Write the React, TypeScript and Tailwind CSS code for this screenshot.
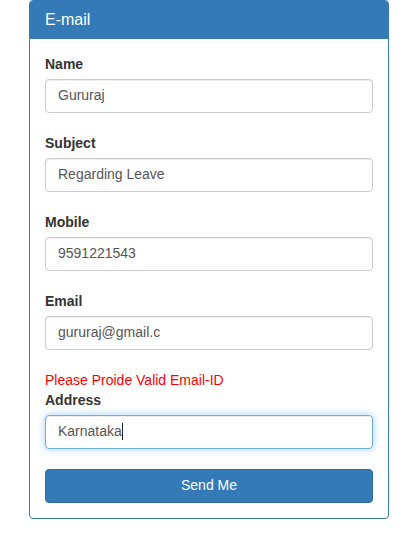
import React from "react";

function Field({ label, value, focused }: { label: string; value: string; focused?: boolean }) {
  return (
    <div>
      <div className="text-[14px] leading-[20px] font-bold text-[#333] mb-[5px]">{label}</div>
      <div
        className={
          "h-[34px] rounded-[4px] border bg-white px-[12px] flex items-center text-[14px] text-[#555] " +
          (focused
            ? "border-[#66afe9] shadow-[inset_0_1px_1px_rgba(0,0,0,0.075),0_0_8px_rgba(102,175,233,0.6)]"
            : "border-[#ccc] shadow-[inset_0_1px_1px_rgba(0,0,0,0.075)]")
        }
      >
        <span>{value}</span>
        {focused && <span className="inline-block w-px h-[17px] bg-[#222]" />}
      </div>
    </div>
  );
}

export default function App() {
  return (
    <div className="bg-white min-h-[533px] w-[414px]" style={{ fontFamily: '"Liberation Sans", Arial, sans-serif' }}>
      <div className="ml-[29px] w-[360px] border border-[#337ab7] rounded-[4px] bg-white">
        <div className="bg-[#337ab7] text-white text-[16px] leading-[17.6px] px-[15px] pt-[10px] pb-[10px] rounded-t-[3px]">
          E-mail
        </div>
        <div className="p-[15px] flex flex-col">
          <div className="flex flex-col gap-[20px]">
            <Field label="Name" value="Gururaj" />
            <Field label="Subject" value="Regarding Leave" />
            <Field label="Mobile" value="9591221543" />
            <Field label="Email" value="gururaj@gmail.c" />
          </div>
          <div className="mt-[20px] text-[14px] leading-[20px] text-[#ff0000]">Please Proide Valid Email-ID</div>
          <Field label="Address" value="Karnataka" focused />
          <button className="mt-[20px] h-[34px] w-full rounded-[4px] border border-[#2e6da4] bg-[#337ab7] text-white text-[14px]">
            Send Me
          </button>
        </div>
      </div>
    </div>
  );
}
